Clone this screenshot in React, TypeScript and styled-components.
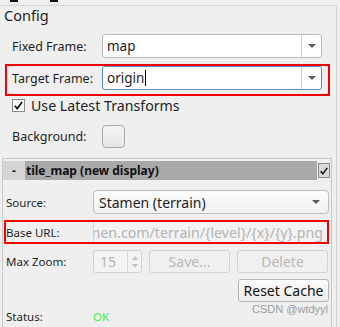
import React from 'react';
import styled, { createGlobalStyle, css } from 'styled-components';

const GlobalStyle = createGlobalStyle`
  html, body {
    margin: 0;
    padding: 0;
    background: #efefef;
  }
  body {
    font-family: "Noto Sans", "DejaVu Sans", sans-serif;
    color: #1e1e1e;
  }
`;

const Screen = styled.div`
  position: relative;
  width: 340px;
  height: 327px;
  overflow: hidden;
  background: #efefef;
`;

const Remnant = styled.div`
  display: flex;
  gap: 32px;
  height: 5px;
  padding-left: 10px;

  span {
    width: 8px;
    height: 2px;
    background: #111;
  }
`;

const Panel = styled.div`
  width: 336px;
  height: 322px;
  border-top: 1px solid #d4d4d4;
  border-right: 1px solid #cdcdcd;
`;

const Title = styled.div`
  height: 18px;
  line-height: 18px;
  padding-left: 4px;
  font-size: 14.5px;
`;

const redBox = css<{ $left: number; $right: number; $top: number; $bottom: number }>`
  &::after {
    content: '';
    position: absolute;
    left: ${(p) => p.$left}px;
    right: ${(p) => p.$right}px;
    top: ${(p) => p.$top}px;
    bottom: ${(p) => p.$bottom}px;
    border: 2px solid #f00000;
    pointer-events: none;
  }
`;

type RowProps = {
  $gap: number;
  $height: number;
  $marked?: boolean;
  $left: number;
  $right: number;
  $top: number;
  $bottom: number;
};

const TopRow = styled.div<RowProps>`
  position: relative;
  display: flex;
  align-items: center;
  margin-top: ${(p) => p.$gap}px;
  height: ${(p) => p.$height}px;
  padding-left: 12px;
  padding-right: 14px;
  ${(p) => p.$marked && redBox}
`;

const TopLabel = styled.div`
  width: 90px;
  flex: none;
  font-size: 12.5px;
`;

const Combo = styled.div<{ $focused?: boolean }>`
  flex: 1;
  align-self: stretch;
  display: flex;
  background: #fff;
  border: 1px solid ${(p) => (p.$focused ? '#5a8cc4' : '#b9b9b9')};
  border-radius: 3px;
  font-size: 13.5px;
`;

const ComboText = styled.div`
  flex: 1;
  display: flex;
  align-items: center;
  padding-left: 4px;
`;

const Caret = styled.span`
  width: 1px;
  height: 16px;
  margin-left: 1px;
  background: #000;
`;

const ArrowBox = styled.div`
  width: 19px;
  display: flex;
  align-items: center;
  justify-content: center;
  border-left: 1px solid #cfcfcf;
`;

const Arrow = styled.span`
  width: 0;
  height: 0;
  border-left: 4px solid transparent;
  border-right: 4px solid transparent;
  border-top: 4px solid #5c5c5c;
`;

const CheckRow = styled.div`
  display: flex;
  align-items: center;
  gap: 6px;
  margin-top: 8px;
  height: 14px;
  padding-left: 12px;
  font-size: 14.2px;
`;

const CheckBox = styled.span<{ $w: number; $h: number; $bg: string }>`
  width: ${(p) => p.$w}px;
  height: ${(p) => p.$h}px;
  box-sizing: border-box;
  display: flex;
  align-items: center;
  justify-content: center;
  border: 1px solid #8a8a8a;
  background: ${(p) => p.$bg};
  flex: none;
`;

const ColorButton = styled.div`
  width: 23px;
  height: 23px;
  box-sizing: border-box;
  border: 1px solid #a9a9a9;
  border-radius: 4px;
  background: linear-gradient(#f4f4f4, #e6e6e6);
`;

const Group = styled.div`
  margin-top: 10px;
  margin-left: 2px;
  width: 330px;
  height: 200px;
  box-sizing: border-box;
  border: 1px solid #c8c8c8;
`;

const Header = styled.div`
  display: flex;
  align-items: center;
  margin-top: 2px;
  height: 19px;
  font-size: 12px;
`;

const Collapse = styled.div`
  width: 22px;
  align-self: stretch;
  display: flex;
  align-items: center;
  justify-content: center;
  background: #d5d5d5;
  font-weight: bold;
`;

const HeaderName = styled.div`
  width: 292px;
  align-self: stretch;
  display: flex;
  align-items: center;
  padding-left: 1px;
  box-sizing: border-box;
  background: #a9a9a9;
  font-weight: bold;
  color: #111;
`;

const BodyRow = styled.div<RowProps>`
  position: relative;
  display: flex;
  align-items: center;
  margin-top: ${(p) => p.$gap}px;
  height: ${(p) => p.$height}px;
  padding-left: 3px;
  padding-right: 2px;
  ${(p) => p.$marked && redBox}
`;

const BodyLabel = styled.div`
  width: 87px;
  flex: none;
  font-size: 11.5px;
`;

const SourceCombo = styled.div`
  flex: 1;
  align-self: stretch;
  display: flex;
  align-items: center;
  justify-content: space-between;
  padding: 0 8px 0 5px;
  box-sizing: border-box;
  border: 1px solid #bcbcbc;
  border-radius: 4px;
  background: linear-gradient(#fdfdfd, #f1f1f1);
  font-size: 14px;
`;

const UrlField = styled.div`
  flex: 1;
  align-self: stretch;
  display: flex;
  align-items: center;
  justify-content: flex-end;
  overflow: hidden;
  white-space: nowrap;
  margin-right: 1px;
  padding-right: 4px;
  border: 1px solid #d0d0d0;
  border-radius: 2px;
  background: #f3f3f3;
  color: #b4b4b4;
  font-size: 14.2px;
`;

const Spin = styled.div`
  width: 49px;
  align-self: stretch;
  display: flex;
  box-sizing: border-box;
  border: 1px solid #d0d0d0;
  border-radius: 3px;
  background: #f3f3f3;
  color: #b4b4b4;
  font-size: 14px;
`;

const SpinValue = styled.div`
  flex: 1;
  display: flex;
  align-items: center;
  padding-left: 6px;
`;

const SpinArrows = styled.div`
  width: 13px;
  display: flex;
  flex-direction: column;
  align-items: center;
  justify-content: center;
  gap: 4px;
  border-left: 1px solid #d6d6d6;
`;

const SpinTri = styled.span<{ $up?: boolean }>`
  width: 0;
  height: 0;
  border-left: 3.5px solid transparent;
  border-right: 3.5px solid transparent;
  ${(p) =>
    p.$up ? 'border-bottom: 4px solid #c2c2c2;' : 'border-top: 4px solid #c2c2c2;'}
`;

const Button = styled.div<{ $width: number; $disabled?: boolean }>`
  width: ${(p) => p.$width}px;
  align-self: stretch;
  display: flex;
  align-items: center;
  justify-content: center;
  box-sizing: border-box;
  margin-left: 7px;
  border: 1px solid ${(p) => (p.$disabled ? '#d2d2d2' : '#b5b5b5')};
  border-radius: 3px;
  background: ${(p) =>
    p.$disabled ? '#f0f0f0' : 'linear-gradient(#fbfbfb, #ececec)'};
  color: ${(p) => (p.$disabled ? '#b8b8b8' : '#111')};
  font-size: 14px;
`;

const RightButtons = styled(BodyRow)`
  justify-content: flex-end;
`;

const StatusOk = styled.span`
  color: #3ff03f;
  font-size: 11.5px;
`;

const Watermark = styled.div`
  position: absolute;
  right: 12px;
  top: 303px;
  font-family: "Liberation Sans", Arial, sans-serif;
  font-size: 11px;
  color: #9c9c9c;
`;

const Tick: React.FC<{ size: number }> = ({ size }) => (
  <svg width={size} height={size} viewBox="0 0 12 12">
    <path d="M2 6.2 L4.6 9.4 L10 2.2" fill="none" stroke="#111" strokeWidth="1.8" />
  </svg>
);

const noBox = { $left: 0, $right: 0, $top: 0, $bottom: 0 };

const App: React.FC = () => {
  return (
    <Screen>
      <GlobalStyle />
      <Remnant>
        <span />
        <span />
      </Remnant>
      <Panel>
        <Title>Config</Title>
        <TopRow $gap={10} $height={24} {...noBox}>
          <TopLabel>Fixed Frame:</TopLabel>
          <Combo>
            <ComboText>map</ComboText>
            <ArrowBox>
              <Arrow />
            </ArrowBox>
          </Combo>
        </TopRow>
        <TopRow
          $gap={8}
          $height={24}
          $marked
          $left={5}
          $right={6}
          $top={-2}
          $bottom={-6}
        >
          <TopLabel>Target Frame:</TopLabel>
          <Combo $focused>
            <ComboText>
              origin
              <Caret />
            </ComboText>
            <ArrowBox>
              <Arrow />
            </ArrowBox>
          </Combo>
        </TopRow>
        <CheckRow>
          <CheckBox $w={13} $h={13} $bg="#fff">
            <Tick size={11} />
          </CheckBox>
          Use Latest Transforms
        </CheckRow>
        <TopRow $gap={13} $height={23} {...noBox}>
          <TopLabel>Background:</TopLabel>
          <ColorButton />
        </TopRow>
        <Group>
          <Header>
            <Collapse>-</Collapse>
            <HeaderName>tile_map (new display)</HeaderName>
            <CheckBox $w={12} $h={15} $bg="#dadada" style={{ marginLeft: 1 }}>
              <Tick size={10} />
            </CheckBox>
          </Header>
          <BodyRow $gap={10} $height={24} {...noBox}>
            <BodyLabel>Source:</BodyLabel>
            <SourceCombo>
              Stamen (terrain)
              <Arrow />
            </SourceCombo>
          </BodyRow>
          <BodyRow
            $gap={7}
            $height={22}
            $marked
            $left={1}
            $right={2}
            $top={-1}
            $bottom={-1}
          >
            <BodyLabel>Base URL:</BodyLabel>
            <UrlField>stamen.com/terrain/{'{level}'}/{'{x}'}/{'{y}'}.png</UrlField>
          </BodyRow>
          <BodyRow $gap={7} $height={23} {...noBox}>
            <BodyLabel>Max Zoom:</BodyLabel>
            <Spin>
              <SpinValue>15</SpinValue>
              <SpinArrows>
                <SpinTri $up />
                <SpinTri />
              </SpinArrows>
            </Spin>
            <Button $width={81} $disabled>
              Save...
            </Button>
            <Button $width={91} $disabled>
              Delete
            </Button>
          </BodyRow>
          <RightButtons $gap={6} $height={23} {...noBox}>
            <Button $width={91}>Reset Cache</Button>
          </RightButtons>
          <BodyRow $gap={6} $height={16} {...noBox}>
            <BodyLabel>Status:</BodyLabel>
            <StatusOk>OK</StatusOk>
          </BodyRow>
        </Group>
      </Panel>
      <Watermark>CSDN @wtdyyl</Watermark>
    </Screen>
  );
};

export default App;
